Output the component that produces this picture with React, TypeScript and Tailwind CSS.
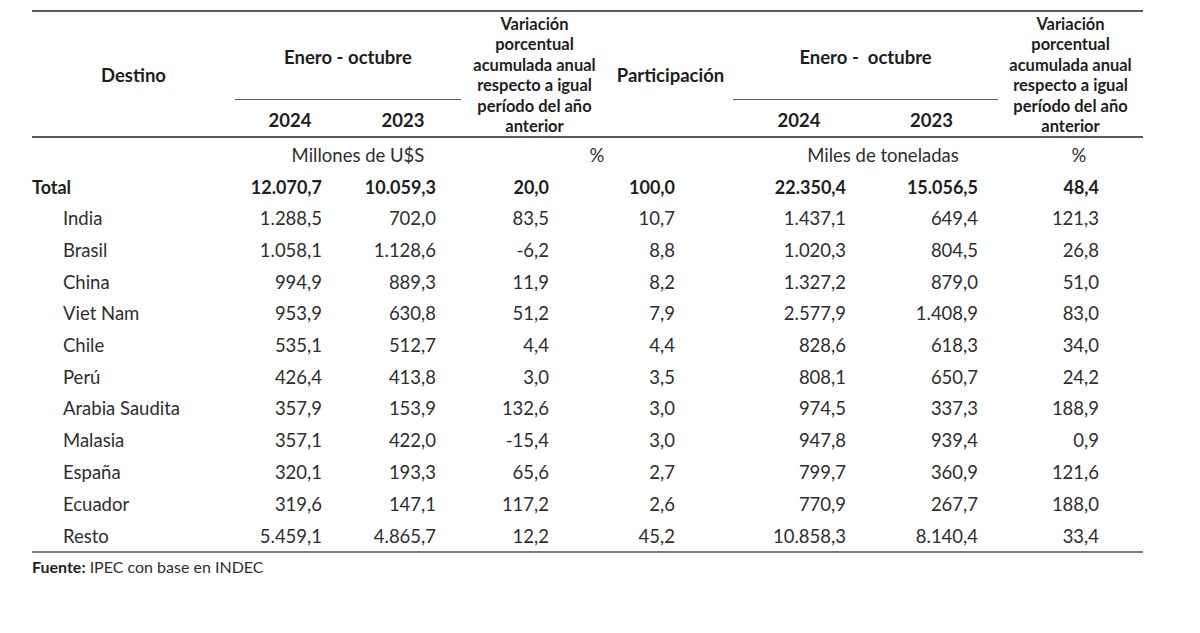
import React from 'react'

type Row = [string, string, string, string, string, string, string, string]

const rows: Row[] = [
  ['India', '1.288,5', '702,0', '83,5', '10,7', '1.437,1', '649,4', '121,3'],
  ['Brasil', '1.058,1', '1.128,6', '-6,2', '8,8', '1.020,3', '804,5', '26,8'],
  ['China', '994,9', '889,3', '11,9', '8,2', '1.327,2', '879,0', '51,0'],
  ['Viet Nam', '953,9', '630,8', '51,2', '7,9', '2.577,9', '1.408,9', '83,0'],
  ['Chile', '535,1', '512,7', '4,4', '4,4', '828,6', '618,3', '34,0'],
  ['Perú', '426,4', '413,8', '3,0', '3,5', '808,1', '650,7', '24,2'],
  ['Arabia Saudita', '357,9', '153,9', '132,6', '3,0', '974,5', '337,3', '188,9'],
  ['Malasia', '357,1', '422,0', '-15,4', '3,0', '947,8', '939,4', '0,9'],
  ['España', '320,1', '193,3', '65,6', '2,7', '799,7', '360,9', '121,6'],
  ['Ecuador', '319,6', '147,1', '117,2', '2,6', '770,9', '267,7', '188,0'],
  ['Resto', '5.459,1', '4.865,7', '12,2', '45,2', '10.858,3', '8.140,4', '33,4'],
]

const total: Row = ['Total', '12.070,7', '10.059,3', '20,0', '100,0', '22.350,4', '15.056,5', '48,4']

// right padding of each numeric column so the figures line up like the source
const pads = ['', 'pr-[23px]', 'pr-[25px]', 'pr-[59px]', 'pr-[58px]', 'pr-[19px]', 'pr-[20px]', 'pr-[44px]']

const varText = (
  <>
    Variación
    <br />
    porcentual
    <br />
    acumulada anual
    <br />
    respecto a igual
    <br />
    período del año
    <br />
    anterior
  </>
)

function DataRow({ r, bold, last }: { r: Row; bold?: boolean; last?: boolean }) {
  return (
    <tr className={last ? 'h-[29px]' : 'h-[31.73px]'}>
      {r.map((v, i) => (
        <td
          key={i}
          className={[
            'p-0 whitespace-nowrap',
            i === 0 ? (bold ? 'text-left' : 'text-left pl-[31px]') : `text-right ${pads[i]}`,
            bold ? 'font-bold text-[#1e1e1e] text-[18px]' : 'text-[#2e2e2e]',
            last ? 'border-b-2 border-[#7a7a7a] pt-[3px] align-top' : 'align-middle',
          ].join(' ')}
        >
          {v}
        </td>
      ))}
    </tr>
  )
}

export default function App() {
  return (
    <div className="min-h-[633px] w-[1200px] bg-white pl-[32px] pt-[10px] font-['Lato',sans-serif] text-[18.5px] text-[#2e2e2e]">
      <table className="w-[1111px] table-fixed border-separate border-spacing-0">
        <colgroup>
          <col className="w-[203px]" />
          <col className="w-[110px]" />
          <col className="w-[116px]" />
          <col className="w-[147px]" />
          <col className="w-[125px]" />
          <col className="w-[132px]" />
          <col className="w-[133px]" />
          <col className="w-[145px]" />
        </colgroup>
        <thead className="font-bold text-[#1e1e1e]">
          <tr className="h-[90px]">
            <th rowSpan={2} className="border-y-2 border-[#5a5a5a] p-0 pt-[4px] align-middle font-bold">
              Destino
            </th>
            <th colSpan={2} className="border-t-2 border-b border-[#5a5a5a] p-0 pt-[4px] align-middle font-bold">
              Enero - octubre
            </th>
            <th
              rowSpan={2}
              className="border-y-2 border-[#5a5a5a] p-0 pt-[2px] align-top text-[16.5px] leading-[20.4px] font-bold"
            >
              {varText}
            </th>
            <th rowSpan={2} className="border-y-2 border-[#5a5a5a] p-0 pt-[4px] align-middle font-bold">
              Participación
            </th>
            <th colSpan={2} className="border-t-2 border-b border-[#5a5a5a] p-0 pt-[4px] align-middle font-bold whitespace-pre">
              {'Enero -  octubre'}
            </th>
            <th
              rowSpan={2}
              className="border-y-2 border-[#5a5a5a] p-0 pt-[2px] align-top text-[16.5px] leading-[20.4px] font-bold"
            >
              {varText}
            </th>
          </tr>
          <tr className="h-[38px]">
            <th className="border-b-2 border-[#5a5a5a] p-0 pt-[6px] align-middle font-bold">2024</th>
            <th className="border-b-2 border-[#5a5a5a] p-0 pt-[6px] align-middle font-bold">2023</th>
            <th className="border-b-2 border-[#5a5a5a] p-0 pt-[6px] align-middle font-bold">2024</th>
            <th className="border-b-2 border-[#5a5a5a] p-0 pt-[6px] align-middle font-bold">2023</th>
          </tr>
        </thead>
        <tbody>
          <tr className="h-[33px] text-[#2e2e2e]">
            <td className="p-0" />
            <td colSpan={2} className="p-0 pl-[20px] pt-[1px] text-center align-middle">
              Millones de U$S
            </td>
            <td colSpan={2} className="p-0 pt-[1px] text-center align-middle">
              %
            </td>
            <td colSpan={2} className="p-0 pl-[35px] pt-[1px] text-center align-middle">
              Miles de toneladas
            </td>
            <td className="p-0 pl-[17px] pt-[1px] text-center align-middle">%</td>
          </tr>
          <DataRow r={total} bold />
          {rows.map((r, i) => (
            <DataRow key={r[0]} r={r} last={i === rows.length - 1} />
          ))}
        </tbody>
      </table>
      <p className="mt-[2px] text-[16px] text-[#2e2e2e]">
        <span className="font-bold text-[#1e1e1e]">Fuente:</span> IPEC con base en INDEC
      </p>
    </div>
  )
}
